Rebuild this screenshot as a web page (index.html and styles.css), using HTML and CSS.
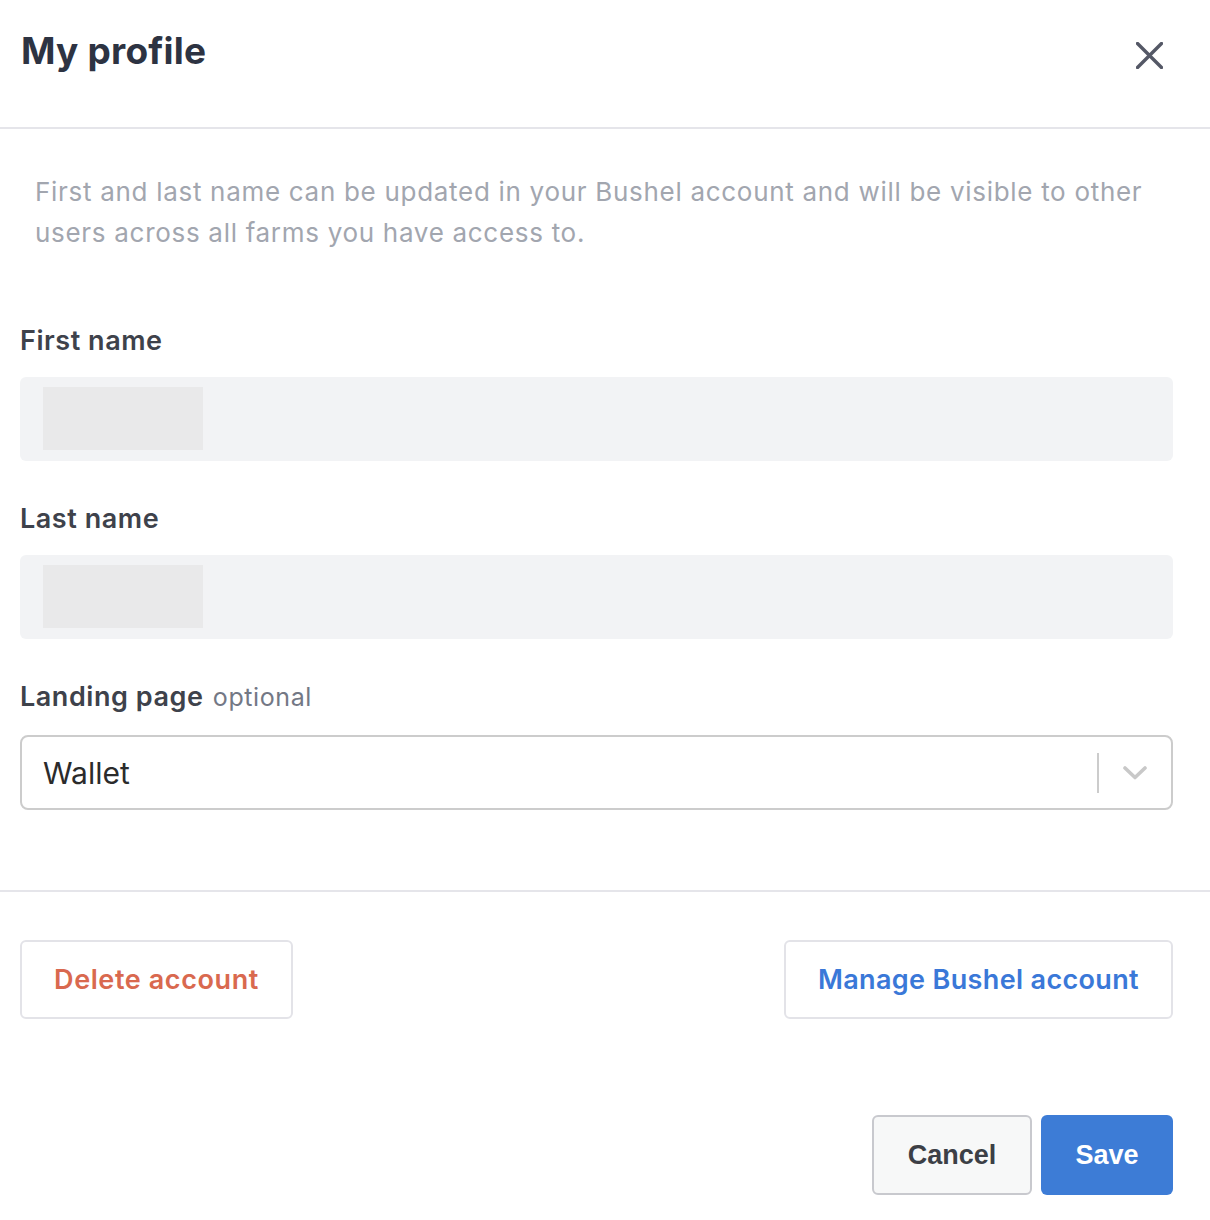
FILE: index.html
```html
<!DOCTYPE html>
<html>
<head>
<meta charset="UTF-8">
<title>My profile</title>
<link rel="stylesheet" href="styles.css">
</head>
<body>
<div class="modal">
	<!-- 제목 + 닫기 -->
	<div class="modal-header">
		<h1 class="modal-title">My profile</h1>
		<button class="close-btn" type="button" aria-label="Close">
			<svg width="27" height="27" viewBox="0 0 27 27">
				<path d="M1.5 1.5 L25.5 25.5 M25.5 1.5 L1.5 25.5" stroke="#545866" stroke-width="3.4" stroke-linecap="round" fill="none"/>
			</svg>
		</button>
	</div>

	<div class="modal-body">
		<p class="note">First and last name can be updated in your Bushel account and will be visible to other users across all farms you have access to.</p>

		<div class="field">
			<label class="field-label">First name</label>
			<div class="readonly-box"><span class="skeleton"></span></div>
		</div>

		<div class="field">
			<label class="field-label">Last name</label>
			<div class="readonly-box"><span class="skeleton"></span></div>
		</div>

		<div class="field field-select">
			<label class="field-label">Landing page <span class="optional">optional</span></label>
			<div class="select">
				<span class="select-value">Wallet</span>
				<span class="select-sep"></span>
				<svg class="select-arrow" width="24" height="14" viewBox="0 0 24 14">
					<path d="M2 2 L12 11.5 L22 2" stroke="#c8c8c8" stroke-width="3.6" stroke-linecap="round" stroke-linejoin="round" fill="none"/>
				</svg>
			</div>
		</div>
	</div>

	<div class="account-actions">
		<button class="outline-btn danger" type="button">Delete account</button>
		<button class="outline-btn link" type="button">Manage Bushel account</button>
	</div>

	<div class="modal-footer">
		<button class="cancel-btn" type="button">Cancel</button>
		<button class="save-btn" type="button">Save</button>
	</div>
</div>
</body>
</html>
```

FILE: styles.css
```css
body{
	margin:0;
	background:#fff;
	font-family:"Inter", "Noto Sans", sans-serif;
}
.modal{
	width:1210px;
}
.modal-header{
	height:129px;
	display:flex;
	justify-content:space-between;
	align-items:flex-start;
	padding:0 47px 0 21px;
	border-bottom:2px solid #e5e5ea;
	box-sizing:border-box;
}
.modal-title{
	margin:26px 0 0;
	font-size:37px;
	line-height:50px;
	font-weight:700;
	color:#2d3342;
	letter-spacing:0.2px;
}
.close-btn{
	margin-top:42px;
	padding:0;
	border:none;
	background:none;
	width:27px;
	height:27px;
	display:block;
}
.close-btn svg{
	display:block;
}
.modal-body{
	padding:42px 37px 0 20px;
}
.note{
	margin:0 0 71px 15px;
	font-size:26px;
	line-height:41px;
	letter-spacing:0.7px;
	color:#a2a6af;
}
.field{
	margin-bottom:41px;
}
.field:last-child{
	margin-bottom:0;
}
.field-label{
	display:block;
	font-size:27px;
	line-height:34px;
	font-weight:600;
	letter-spacing:0.55px;
	color:#3e424b;
	margin-bottom:19px;
}
.field-select{
	margin-top:1px;
}
.field-select .field-label{
	margin-bottom:21px;
}
.optional{
	font-size:25px;
	font-weight:400;
	letter-spacing:0.6px;
	color:#737885;
	margin-left:2px;
}
.readonly-box{
	height:84px;
	background:#f2f3f5;
	border-radius:6px;
	padding:10px 23px;
	box-sizing:border-box;
}
.skeleton{
	display:block;
	width:160px;
	height:63px;
	background:#e9e9ea;
}
.select{
	height:75px;
	border:2px solid #cccccc;
	border-radius:8px;
	box-sizing:border-box;
	display:flex;
	align-items:center;
	padding:0 24px 0 21px;
}
.select-value{
	flex:1;
	font-size:30px;
	color:#2b2b2b;
}
.select-sep{
	width:2px;
	height:40px;
	background:#cccccc;
	margin-right:24px;
}
.account-actions{
	margin-top:80px;
	border-top:2px solid #e5e5ea;
	padding:48px 37px 0 20px;
	display:flex;
	justify-content:space-between;
}
.outline-btn{
	height:79px;
	background:#fff;
	border:2px solid #e3e3e8;
	border-radius:6px;
	font-family:"Inter", "Noto Sans", sans-serif;
	font-size:27px;
	font-weight:600;
	padding:0;
}
.outline-btn.danger{
	color:#d9694f;
	width:273px;
	letter-spacing:0.6px;
}
.outline-btn.link{
	color:#3a78d8;
	width:389px;
	letter-spacing:0.35px;
}
.modal-footer{
	padding:96px 37px 0 0;
	display:flex;
	justify-content:flex-end;
	gap:9px;
}
.cancel-btn, .save-btn{
	height:80px;
	border-radius:6px;
	font-family:"Liberation Sans", Arial, sans-serif;
	font-size:27px;
	font-weight:700;
}
.cancel-btn{
	width:160px;
	background:#f7f8f8;
	border:2px solid #c8c9ce;
	color:#3c3f46;
}
.save-btn{
	width:132px;
	background:#3d7cd6;
	border:none;
	color:#fff;
}
```
